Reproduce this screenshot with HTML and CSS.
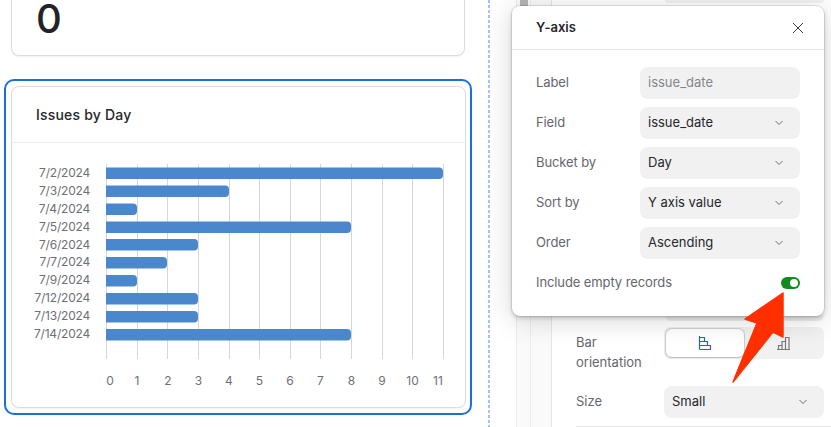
FILE: index.html
```html
<!DOCTYPE html>
<html lang="en">
<head>
<meta charset="utf-8">
<title>Issues by Day</title>
<link rel="stylesheet" href="styles.css">
</head>
<body>
<div class="page">
  <main class="canvas">
    <section class="card stat-card"><div class="stat">0</div></section>
    <div class="selected">
      <section class="card chart-card">
        <h2 class="chart-title">Issues by Day</h2>
        <svg class="chart" width="453" height="264" viewBox="12 143 453 264">
          <g class="grid">
            <path d="M106.500 164V359M137.500 164V359M167.500 164V359M198.500 164V359M229.500 164V359M259.500 164V359M290.500 164V359M320.500 164V359M351.500 164V359M382.500 164V359M412.500 164V359M443.500 164V359"/>
          </g>
          <g class="bars">
            <path d="M106 167.500H439a4 4 0 0 1 4 4v3.500a4 4 0 0 1-4 4H106Z"/>
            <path d="M106 185.500H225a4 4 0 0 1 4 4v3.500a4 4 0 0 1-4 4H106Z"/>
            <path d="M106 203.500H133a4 4 0 0 1 4 4v3.500a4 4 0 0 1-4 4H106Z"/>
            <path d="M106 221.500H347a4 4 0 0 1 4 4v3.500a4 4 0 0 1-4 4H106Z"/>
            <path d="M106 239H194a4 4 0 0 1 4 4v3.500a4 4 0 0 1-4 4H106Z"/>
            <path d="M106 257H163a4 4 0 0 1 4 4v3.500a4 4 0 0 1-4 4H106Z"/>
            <path d="M106 275H133a4 4 0 0 1 4 4v3.500a4 4 0 0 1-4 4H106Z"/>
            <path d="M106 293H194a4 4 0 0 1 4 4v3.500a4 4 0 0 1-4 4H106Z"/>
            <path d="M106 311H194a4 4 0 0 1 4 4v3.500a4 4 0 0 1-4 4H106Z"/>
            <path d="M106 329H347a4 4 0 0 1 4 4v3.500a4 4 0 0 1-4 4H106Z"/>
          </g>
          <g class="ylabels">
            <text x="90" y="177">7/2/2024</text>
            <text x="90" y="195">7/3/2024</text>
            <text x="90" y="213">7/4/2024</text>
            <text x="90" y="231">7/5/2024</text>
            <text x="90" y="249">7/6/2024</text>
            <text x="90" y="266">7/7/2024</text>
            <text x="90" y="284">7/9/2024</text>
            <text x="90" y="302">7/12/2024</text>
            <text x="90" y="320">7/13/2024</text>
            <text x="90" y="338">7/14/2024</text>
          </g>
          <g class="xlabels">
            <text x="110" y="385">0</text>
            <text x="137" y="385">1</text>
            <text x="168" y="385">2</text>
            <text x="198.500" y="385">3</text>
            <text x="229" y="385">4</text>
            <text x="259.500" y="385">5</text>
            <text x="290" y="385">6</text>
            <text x="320.500" y="385">7</text>
            <text x="351.500" y="385">8</text>
            <text x="382" y="385">9</text>
            <text x="412.500" y="385">10</text>
            <text x="438" y="385">11</text>
          </g>
        </svg>
      </section>
    </div>
  </main>

  <aside class="side">
    <div class="rail rail-a"></div>
    <div class="rail rail-b"><span class="thumb"></span></div>
    <div class="settings">
      <div class="peek-top"></div>
      <div class="peek-mid"></div>
      <div class="row row-bar">
        <span class="row-label">Bar orientation</span>
        <div class="segmented">
          <button class="seg seg-on" type="button" aria-label="Horizontal">
            <svg width="14" height="14" viewBox="0 0 14 14" class="ic-blue"><path d="M1.500 0V13.500M1.500 1.500H6.500V5.500H1.500M6.500 5.500H9.500V9.500H1.500M9.500 9.500H12.500V13.500H1.500"/></svg>
          </button>
          <button class="seg" type="button" aria-label="Vertical">
            <svg width="14" height="14" viewBox="0 0 14 14" class="ic-gray"><path d="M1 13.500H14M2.500 13.500V9.500H6V13.500M6 13.500V5.500H9.500V13.500M9.500 13.500V1.500H13V13.500"/></svg>
          </button>
        </div>
      </div>
      <div class="row row-size">
        <span class="row-label">Size</span>
        <div class="select select-wide">Small<svg class="chev" width="10" height="6" viewBox="0 0 10 6"><path d="M1.500 1 5 4.500 8.500 1"/></svg></div>
      </div>
      <div class="end-rule"></div>
    </div>
  </aside>

  <div class="popover">
    <header class="pop-head">
      <h3 class="pop-title">Y-axis</h3>
      <svg class="close" width="12" height="12" viewBox="0 0 12 12"><path d="M1 1 11 11M11 1 1 11"/></svg>
    </header>
    <div class="pop-body">
      <div class="field"><span class="field-label">Label</span><div class="select muted">issue_date</div></div>
      <div class="field"><span class="field-label">Field</span><div class="select">issue_date<svg class="chev" width="10" height="6" viewBox="0 0 10 6"><path d="M1.500 1 5 4.500 8.500 1"/></svg></div></div>
      <div class="field"><span class="field-label">Bucket by</span><div class="select">Day<svg class="chev" width="10" height="6" viewBox="0 0 10 6"><path d="M1.500 1 5 4.500 8.500 1"/></svg></div></div>
      <div class="field"><span class="field-label">Sort by</span><div class="select">Y axis value<svg class="chev" width="10" height="6" viewBox="0 0 10 6"><path d="M1.500 1 5 4.500 8.500 1"/></svg></div></div>
      <div class="field"><span class="field-label">Order</span><div class="select">Ascending<svg class="chev" width="10" height="6" viewBox="0 0 10 6"><path d="M1.500 1 5 4.500 8.500 1"/></svg></div></div>
      <div class="toggle-row"><span class="field-label">Include empty records</span><span class="toggle"><span class="knob"></span></span></div>
    </div>
  </div>

  <svg class="arrow" width="60" height="100" viewBox="730 290 60 100">
    <path d="M783 293 745 319 757 323 733 382 773 332 783 337Z"/>
  </svg>
</div>
</body>
</html>
```
FILE: styles.css
```css
* { box-sizing: border-box; }
html, body { margin: 0; padding: 0; background: #fff; }
body { font-family: Inter, "Liberation Sans", sans-serif; color: #222326; }
.page { position: relative; display: flex; width: 831px; height: 427px; overflow: hidden; }

.canvas {
  width: 490px;
  height: 427px;
  flex: none;
  padding-left: 4px;
  background: repeating-linear-gradient(to bottom, #a3c4fb 0 3px, #fff 3px 5px) right top / 2px 100% no-repeat;
}
.card {
  background: #fff;
  border: 1px solid #dcdcdc;
  border-radius: 8px;
  box-shadow: 0 1px 2px rgba(0, 0, 0, .06);
}
.stat-card { width: 454px; height: 56px; margin: 0 0 0 7px; border-top: 0; border-radius: 0 0 8px 8px; padding: 1px 0 0 24px; }
.stat { font-size: 40px; line-height: 36px; height: 36px; color: #222326; font-weight: 500; }
.selected {
  width: 468px;
  height: 336px;
  margin-top: 23px;
  padding: 5px;
  border: 2px solid #1a6fe0;
  border-radius: 10px;
}
.chart-card { width: 455px; height: 322px; overflow: hidden; }
.chart-title {
  margin: 0;
  height: 56px;
  padding: 18px 0 0 24px;
  font-size: 14px;
  line-height: 20px;
  font-weight: 500;
  letter-spacing: .2px;
  color: #26272b;
  border-bottom: 1px solid #ededed;
}
.chart { display: block; }
.grid path { stroke: #d6d6d6; stroke-width: 1; fill: none; }
.bars path { fill: #4a87cd; }
.ylabels text, .xlabels text { font-size: 12px; fill: #6e6f75; font-family: Inter, "Liberation Sans", sans-serif; }
.ylabels text { text-anchor: end; letter-spacing: -.2px; }
.xlabels text { text-anchor: middle; }

.side { position: relative; flex: 1; display: flex; height: 427px; padding-left: 26px; background: #fff; }
.rail { flex: none; height: 427px; }
.rail-a { width: 15px; background: #fafafa; border-left: 1px solid #ececec; border-right: 1px solid #ececec; }
.rail-b { width: 21px; background: #fafafa; border-right: 1px solid #e6e6e6; }
.thumb { display: block; width: 8px; height: 7px; margin-left: -11px; background: #b4b4b4; }
.settings { flex: 1; padding-left: 24px; display: flex; flex-direction: column; }
.peek-top { height: 3px; width: 159px; margin-left: 89px; background: #f1f1f1; border-radius: 0 0 6px 6px; }
.peek-mid { height: 6px; width: 159px; margin: 312px 0 0 89px; background: #f1f1f1; border-radius: 0 0 6px 6px; }
.row { display: flex; align-items: center; }
.row-label { width: 88px; flex: none; font-size: 13px; line-height: 20px; color: #65666c; }
.row-bar { height: 40px; margin-top: 6px; align-items: flex-start; }
.row-bar .row-label { padding-top: 5px; padding-right: 10px; }
.row-size .row-label { padding-bottom: 2px; }
.segmented { display: flex; width: 160px; height: 32px; padding: 2px; background: #f1f1f1; border-radius: 6px; }
.seg { flex: 1; padding: 0; border: 0; background: transparent; border-radius: 6px; display: flex; align-items: center; justify-content: center; }
.seg-on { background: #fff; box-shadow: 0 0 1px 1px rgba(0, 0, 0, .14), 0 1px 2px rgba(0, 0, 0, .1); }
.ic-blue path, .ic-gray path { fill: none; stroke-width: 1.200; }
.ic-blue path { stroke: #2a62c4; }
.ic-gray path { stroke: #77787d; }
.row-size { margin-top: 19px; height: 32px; }
.end-rule { height: 1px; width: 257px; margin: 8px 0 0 0; background: #e6e6e6; }

.select {
  position: relative;
  display: flex;
  align-items: center;
  justify-content: space-between;
  width: 160px;
  height: 32px;
  padding: 0 16px 2px 8px;
  background: #f1f1f1;
  border-radius: 8px;
  font-size: 13px;
  color: #26272b;
}
.select.muted { color: #85868b; }
.chev { display: block; margin-top: 2px; }
.chev path { fill: none; stroke: #6e6f75; stroke-width: 1; }

.popover {
  position: absolute;
  left: 512px;
  top: 6px;
  width: 312px;
  height: 310px;
  background: #fff;
  border-radius: 8px;
  box-shadow: 0 0 0 1px rgba(0, 0, 0, .08), 0 2px 4px rgba(0, 0, 0, .2), 0 4px 28px rgba(0, 0, 0, .16);
}
.pop-head { display: flex; align-items: center; justify-content: space-between; height: 44px; padding: 0 20px 2px 24px; border-bottom: 1px solid #e4e4e4; }
.pop-title { margin: 0; font-size: 13px; font-weight: 600; color: #26272b; }
.close { margin-top: 2px; }
.close path { fill: none; stroke: #3a3b3f; stroke-width: 1; }
.pop-body { padding: 17px 24px 0; display: flex; flex-direction: column; gap: 8px; }
.field { display: flex; align-items: center; justify-content: space-between; height: 32px; }
.field-label { font-size: 13px; color: #65666c; padding-bottom: 2px; letter-spacing: -.1px; }
.toggle-row { display: flex; align-items: center; justify-content: space-between; height: 32px; }
.toggle { display: block; width: 19px; height: 12px; padding: 2px 2px 2px 9px; background: #128a1e; border-radius: 6px; }
.knob { display: block; width: 8px; height: 8px; background: #fff; border-radius: 50%; }

.arrow { position: absolute; left: 730px; top: 290px; }
.arrow path { fill: #ff2f00; stroke: #ff2f00; stroke-width: 1.500; stroke-linejoin: round; }
```
